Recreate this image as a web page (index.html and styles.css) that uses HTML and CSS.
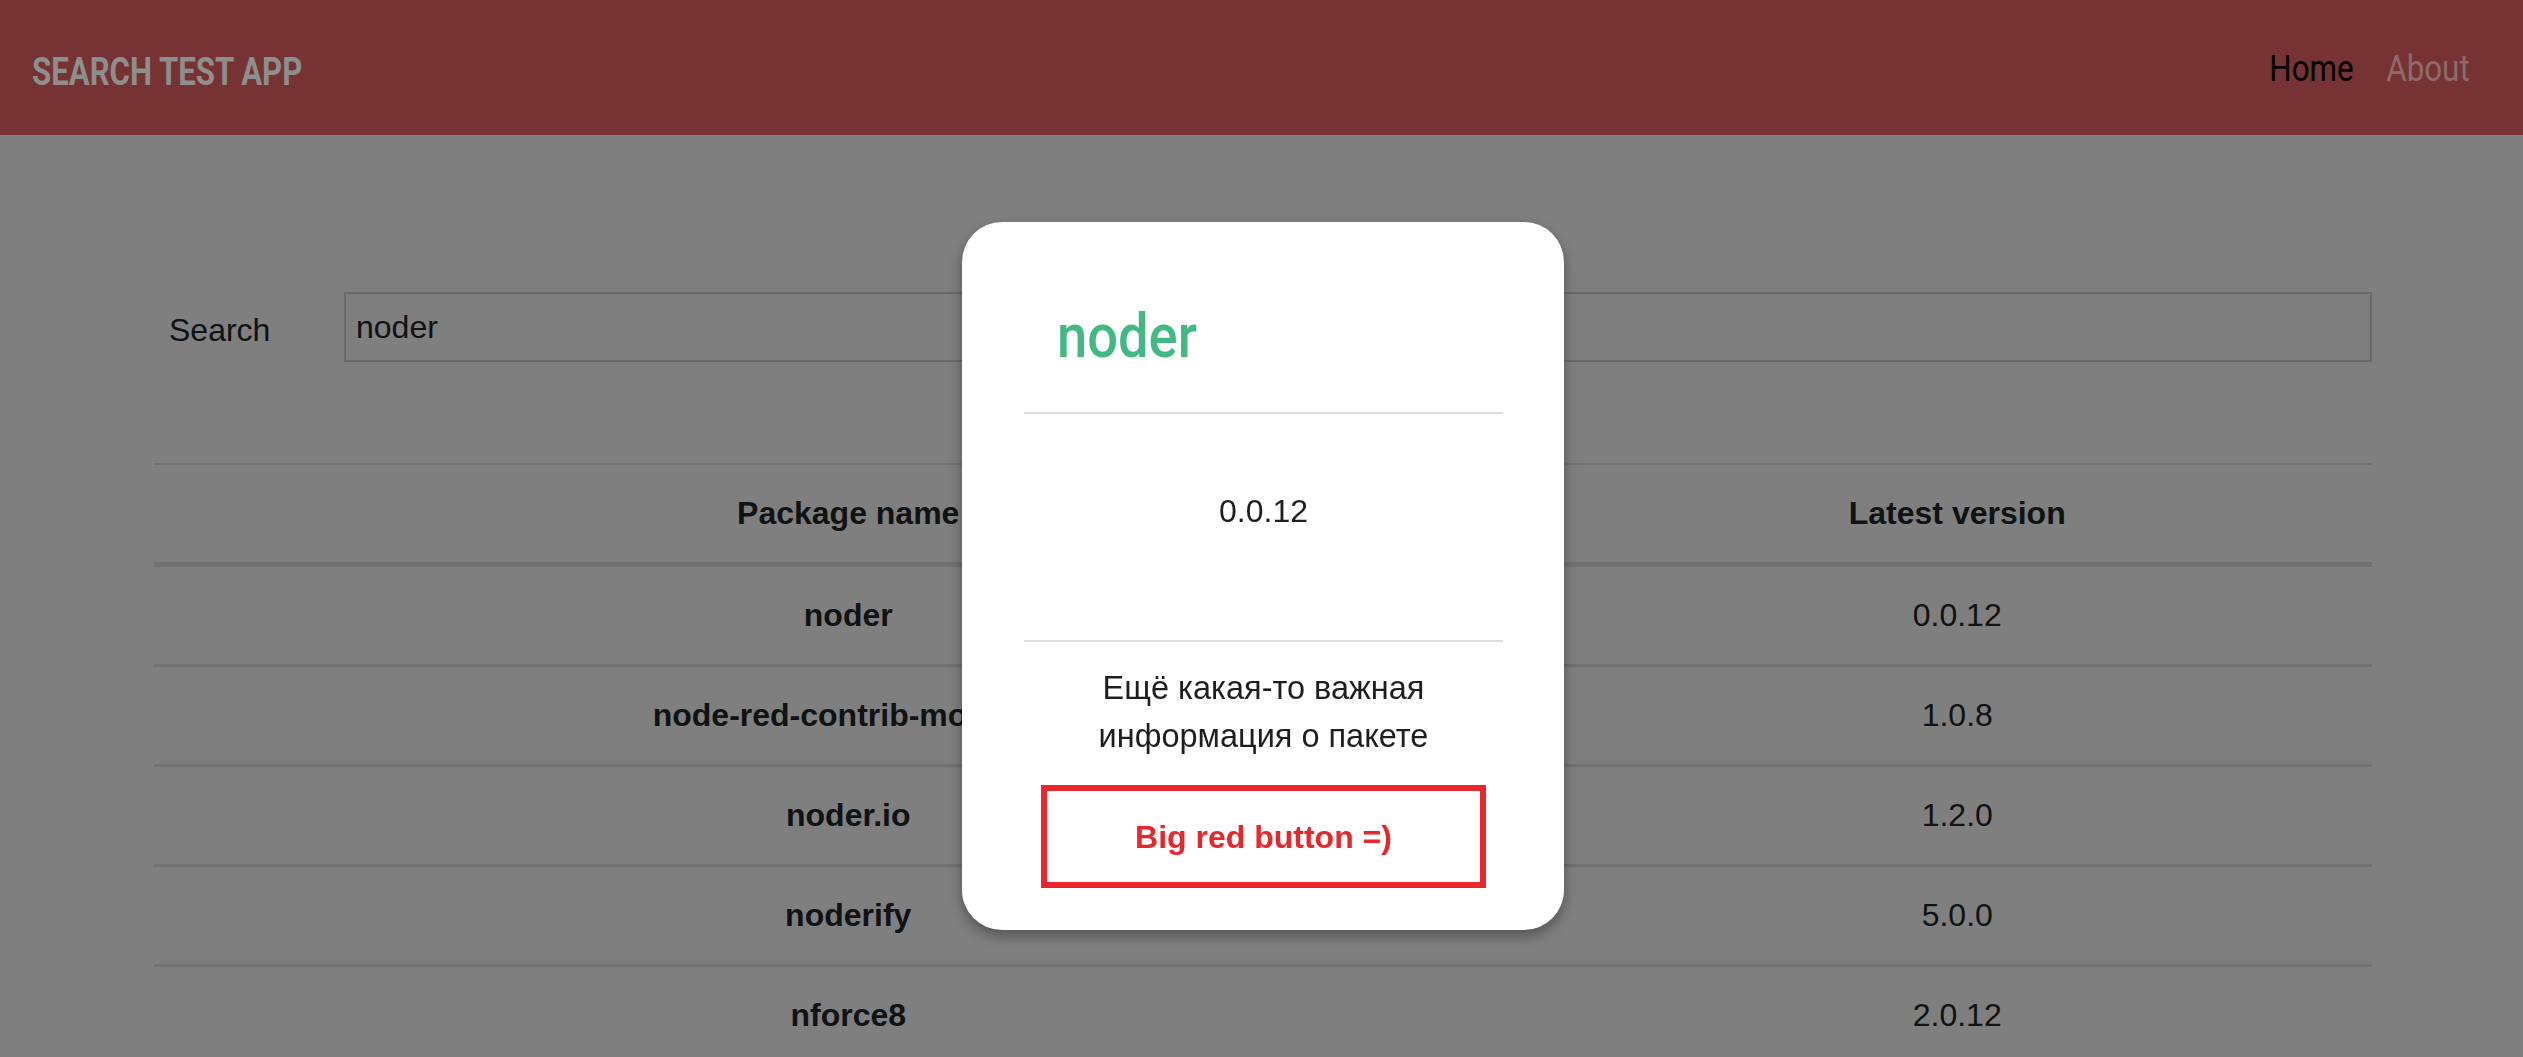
FILE: index.html
```html
<!DOCTYPE html>
<html lang="ru">
<head>
<meta charset="utf-8">
<title>Search test app</title>
<link rel="stylesheet" href="styles.css">
</head>
<body>
<header class="topbar">
  <div class="brand"><span class="brand-text">SEARCH TEST APP</span></div>
  <nav class="nav">
    <a class="nav-link nav-link-active" href="#">Home</a>
    <a class="nav-link" href="#">About</a>
  </nav>
</header>

<main class="content">
  <div class="search-row">
    <label class="search-label" for="q">Search</label>
    <input class="search-input" id="q" type="text" value="noder">
  </div>

  <table class="results">
    <colgroup>
      <col class="col-name">
      <col class="col-version">
    </colgroup>
    <thead>
      <tr><th>Package name</th><th>Latest version</th></tr>
    </thead>
    <tbody>
      <tr><td class="pkg">noder</td><td>0.0.12</td></tr>
      <tr><td class="pkg">node-red-contrib-modbus</td><td>1.0.8</td></tr>
      <tr><td class="pkg">noder.io</td><td>1.2.0</td></tr>
      <tr><td class="pkg">noderify</td><td>5.0.0</td></tr>
      <tr><td class="pkg">nforce8</td><td>2.0.12</td></tr>
    </tbody>
  </table>
</main>

<div class="overlay">
  <div class="modal">
    <div class="modal-header">
      <h2 class="modal-title">noder</h2>
    </div>
    <div class="modal-body">0.0.12</div>
    <div class="modal-footer">
      <p class="modal-info">Ещё какая-то важная информация о пакете</p>
      <button class="big-red" type="button">Big red button =)</button>
    </div>
  </div>
</div>
</body>
</html>
```

FILE: styles.css
```css
html, body {
  margin: 0;
  padding: 0;
  height: 100%;
}

body {
  overflow: hidden;
  background: #ffffff;
  font-family: "Liberation Sans", Arial, sans-serif;
  color: #212529;
}

/* ---------- top bar ---------- */
.topbar {
  position: relative;
  z-index: 2;
  height: 135px;
  box-sizing: border-box;
  padding: 3px 47px 0 32px;
  background: #773333;
  display: flex;
  align-items: center;
  justify-content: space-between;
}

.brand {
  margin-top: 6px;
  font-family: Roboto, "Liberation Sans", sans-serif;
  font-weight: 700;
  font-size: 38px;
  color: #8e8e8e;
  white-space: nowrap;
}

.brand-text {
  display: inline-block;
  transform: scaleX(0.82);
  transform-origin: left center;
}

.nav {
  display: flex;
  gap: 20px;
}

.nav-link {
  display: inline-block;
  font-family: Roboto, "Liberation Sans", sans-serif;
  font-size: 36px;
  color: #8e6a6a;
  text-decoration: none;
  transform: scaleX(0.87);
  transform-origin: center;
}

.nav-link-active {
  color: #000000;
}

/* ---------- page content ---------- */
.content {
  padding: 157px 151px 0 154px;
}

.search-row {
  display: flex;
  align-items: center;
}

.search-label {
  width: 175px;
  padding-left: 15px;
  font-size: 32px;
  line-height: 37px;
  padding-top: 6px;
}

.search-input {
  flex: 1;
  height: 70px;
  box-sizing: border-box;
  border: 2px solid #d2d4d6;
  padding: 0 10px;
  font-family: "Liberation Sans", Arial, sans-serif;
  font-size: 32px;
  color: #212529;
  background: #ffffff;
  outline: none;
}

.results {
  width: 100%;
  margin-top: 101px;
  border-collapse: separate;
  border-spacing: 0;
  font-size: 32px;
  line-height: 37px;
}

.col-name {
  width: 62.6%;
}

.col-version {
  width: 37.4%;
}

.results th,
.results td {
  padding: 30px 0;
  text-align: center;
}

.results th {
  font-weight: 700;
  border-top: 2px solid #dee2e6;
  border-bottom: 5px solid #dee2e6;
}

.results td {
  border-top: 3px solid #dee2e6;
}

.results tbody tr:first-child td {
  border-top: 0;
}

.results .pkg {
  font-weight: 700;
}

/* ---------- modal ---------- */
.overlay {
  position: fixed;
  top: 135px;
  left: 0;
  right: 0;
  bottom: 0;
  z-index: 1;
  background: rgba(0, 0, 0, 0.5);
  display: flex;
  justify-content: center;
  align-items: flex-start;
  padding-top: 87px;
  padding-left: 3px;
}

.modal {
  width: 602px;
  box-sizing: border-box;
  padding: 0 61px 42px 62px;
  background: #ffffff;
  border-radius: 40px;
  box-shadow: 0 6px 14px rgba(0, 0, 0, 0.35);
}

.modal-header {
  padding: 84px 33px 45px;
  border-bottom: 2px solid #dddddd;
}

.modal-title {
  margin: 0;
  display: inline-block;
  font-family: Roboto, "Liberation Sans", sans-serif;
  font-weight: 500;
  font-size: 61px;
  line-height: 61px;
  color: #42b883;
  transform: scaleX(0.89);
  transform-origin: left center;
}

.modal-body {
  padding: 73px 0 105px;
  border-bottom: 2px solid #dddddd;
  text-align: center;
  font-size: 32px;
  line-height: 48px;
  color: #1e1e1e;
}

.modal-footer {
  padding-top: 22px;
  text-align: center;
}

.modal-info {
  margin: 0;
  font-size: 32.5px;
  line-height: 48px;
  color: #1e1e1e;
}

.big-red {
  display: block;
  box-sizing: border-box;
  width: calc(100% - 34px);
  height: 103px;
  margin: 25px 17px 0;
  border: 6px solid #e8272d;
  background: #ffffff;
  color: #e8272d;
  font-family: "Liberation Sans", Arial, sans-serif;
  font-weight: 700;
  font-size: 32px;
  line-height: 48px;
  cursor: pointer;
}
```
